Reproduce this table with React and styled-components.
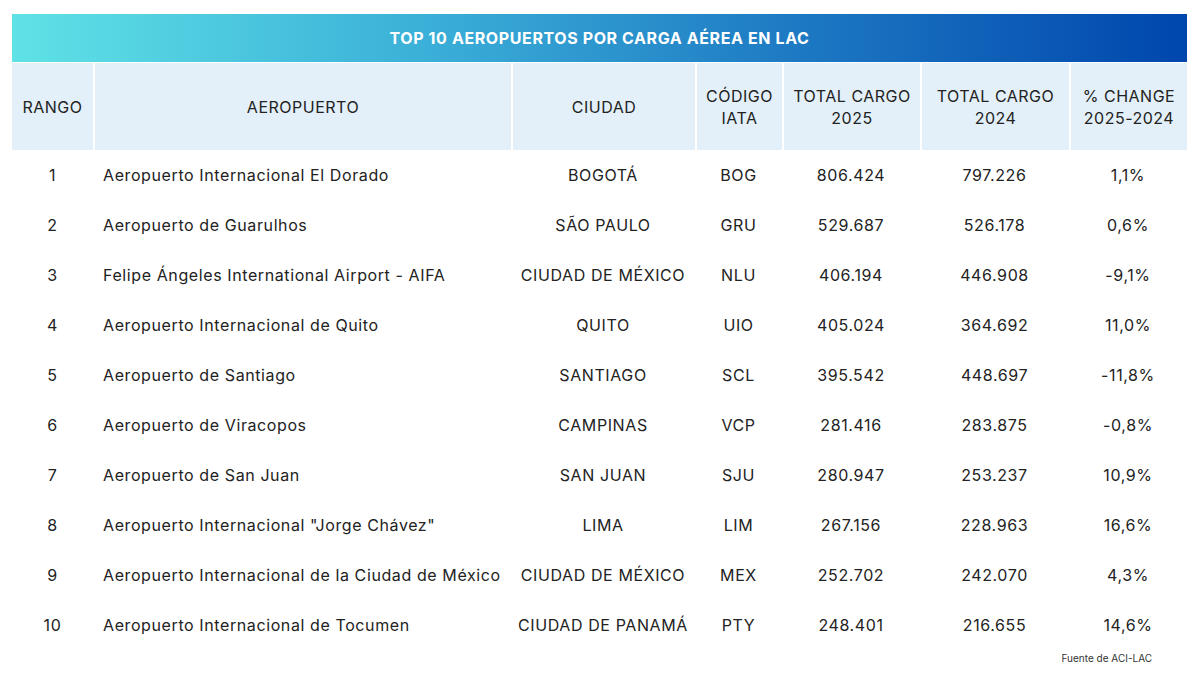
import styled, { createGlobalStyle } from 'styled-components';

const GlobalStyle = createGlobalStyle`
  html, body {
    margin: 0;
    padding: 0;
    background: #ffffff;
  }
  body {
    font-family: Inter, "Noto Sans", "Liberation Sans", sans-serif;
    color: #222222;
  }
`;

const COLUMNS = '81px 418px 184px 87px 138px 149px 118px';

const Page = styled.div`
  width: 1200px;
  height: 675px;
  padding: 14px 13px 0 12px;
  box-sizing: border-box;
`;

const Title = styled.div`
  height: 48px;
  display: flex;
  align-items: center;
  justify-content: center;
  background: linear-gradient(90deg, #5fe2e6 0%, #3bb0d8 35%, #1f7cc4 65%, #0046ad 100%);
  color: #ffffff;
  font-weight: 700;
  font-size: 16px;
  letter-spacing: 0.6px;
  border-bottom: 1px solid #ffffff;
`;

const HeaderRow = styled.div`
  display: grid;
  grid-template-columns: ${COLUMNS};
  height: 87px;
`;

const HeaderCell = styled.div`
  display: flex;
  align-items: center;
  justify-content: center;
  text-align: center;
  background: #e3f0f9;
  border-left: ${(p) => (p.$first ? 'none' : '2px solid #ffffff')};
  font-size: 16px;
  letter-spacing: 0.5px;
  line-height: 22px;
  color: #222222;
  text-transform: uppercase;
`;

const Row = styled.div`
  display: grid;
  grid-template-columns: ${COLUMNS};
  height: 50px;
  align-items: center;
`;

const Cell = styled.div`
  text-align: ${(p) => (p.$left ? 'left' : 'center')};
  padding-left: ${(p) => (p.$left ? '10px' : '0')};
  font-size: 16px;
  letter-spacing: 0.6px;
  color: #222222;
  white-space: nowrap;
`;

const Footer = styled.div`
  display: flex;
  justify-content: flex-end;
  padding: 2px 35px 0 0;
  font-size: 10px;
  color: #333333;
`;

const headers = [
  ['Rango'],
  ['Aeropuerto'],
  ['Ciudad'],
  ['Código', 'IATA'],
  ['Total Cargo', '2025'],
  ['Total Cargo', '2024'],
  ['% Change', '2025-2024'],
];

const rows = [
  [1, 'Aeropuerto Internacional El Dorado', 'BOGOTÁ', 'BOG', '806.424', '797.226', '1,1%'],
  [2, 'Aeropuerto de Guarulhos', 'SÃO PAULO', 'GRU', '529.687', '526.178', '0,6%'],
  [3, 'Felipe Ángeles International Airport - AIFA', 'CIUDAD DE MÉXICO', 'NLU', '406.194', '446.908', '-9,1%'],
  [4, 'Aeropuerto Internacional de Quito', 'QUITO', 'UIO', '405.024', '364.692', '11,0%'],
  [5, 'Aeropuerto de Santiago', 'SANTIAGO', 'SCL', '395.542', '448.697', '-11,8%'],
  [6, 'Aeropuerto de Viracopos', 'CAMPINAS', 'VCP', '281.416', '283.875', '-0,8%'],
  [7, 'Aeropuerto de San Juan', 'SAN JUAN', 'SJU', '280.947', '253.237', '10,9%'],
  [8, 'Aeropuerto Internacional "Jorge Chávez"', 'LIMA', 'LIM', '267.156', '228.963', '16,6%'],
  [9, 'Aeropuerto Internacional de la Ciudad de México', 'CIUDAD DE MÉXICO', 'MEX', '252.702', '242.070', '4,3%'],
  [10, 'Aeropuerto Internacional de Tocumen', 'CIUDAD DE PANAMÁ', 'PTY', '248.401', '216.655', '14,6%'],
];

export default function App() {
  return (
    <>
      <GlobalStyle />
      <Page>
        <Title>TOP 10 AEROPUERTOS POR CARGA AÉREA EN LAC</Title>
        <HeaderRow>
          {headers.map((lines, i) => (
            <HeaderCell key={i} $first={i === 0}>
              <div>
                {lines.map((l, j) => (
                  <div key={j}>{l}</div>
                ))}
              </div>
            </HeaderCell>
          ))}
        </HeaderRow>
        {rows.map((r) => (
          <Row key={r[0]}>
            {r.map((v, i) => (
              <Cell key={i} $left={i === 1}>
                {v}
              </Cell>
            ))}
          </Row>
        ))}
        <Footer>Fuente de ACI-LAC</Footer>
      </Page>
    </>
  );
}
